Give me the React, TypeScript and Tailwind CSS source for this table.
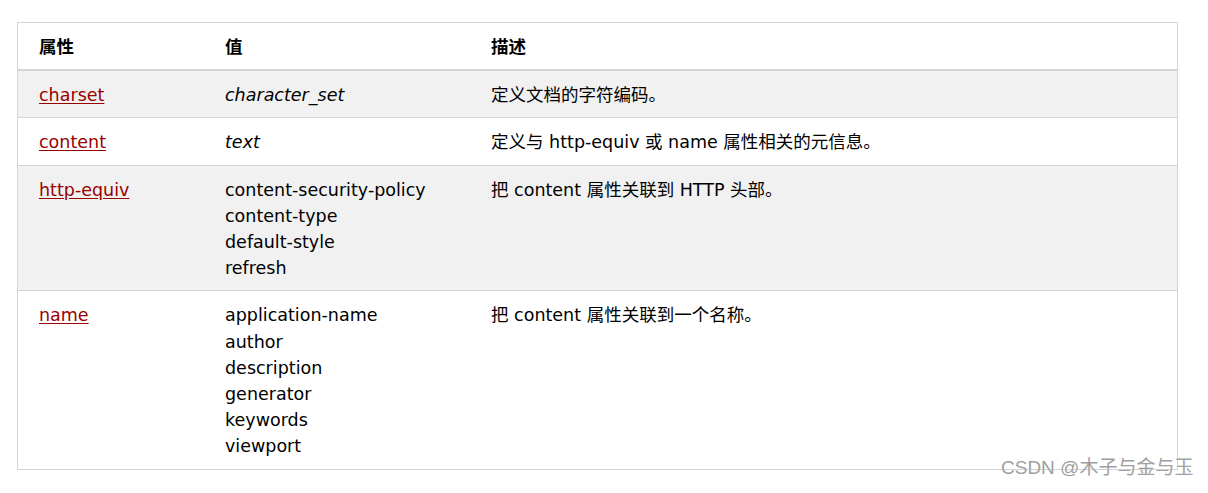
const rows = [
  { attr: 'charset', values: ['character_set'], italic: true, desc: '定义文档的字符编码。', bg: 'bg-[#f1f1f1]' },
  { attr: 'content', values: ['text'], italic: true, desc: '定义与 http-equiv 或 name 属性相关的元信息。', bg: 'bg-white' },
  {
    attr: 'http-equiv',
    values: ['content-security-policy', 'content-type', 'default-style', 'refresh'],
    italic: false,
    desc: '把 content 属性关联到 HTTP 头部。',
    bg: 'bg-[#f1f1f1]',
  },
  {
    attr: 'name',
    values: ['application-name', 'author', 'description', 'generator', 'keywords', 'viewport'],
    italic: false,
    desc: '把 content 属性关联到一个名称。',
    bg: 'bg-white',
  },
];

export default function App() {
  return (
    <div className="relative h-[493px] w-[1208px] bg-white pl-[17px] pt-[22px] font-['DejaVu_Sans','Noto_Sans_CJK_SC',sans-serif] text-[17.5px] leading-[26.2px] text-black">
      <div className="w-[1161px] border border-[#d4d4d4]">
        <div className="grid grid-cols-[186px_266px_1fr] border-b-2 border-[#d4d4d4] pb-[9px] pt-[11px] font-bold">
          <div className="pl-[21px]">属性</div>
          <div className="pl-[21px]">值</div>
          <div className="pl-[21px]">描述</div>
        </div>
        {rows.map((r, i) => (
          <div
            key={r.attr}
            className={`grid grid-cols-[186px_266px_1fr] pb-[9px] pt-[11px] ${r.bg} ${i < rows.length - 1 ? 'border-b border-[#d4d4d4]' : ''}`}
          >
            <div className="pl-[21px]">
              <a className="text-[#900] underline underline-offset-2">{r.attr}</a>
            </div>
            <div className={`pl-[21px] ${r.italic ? 'italic' : ''}`}>
              {r.values.map((v) => (
                <div key={v}>{v}</div>
              ))}
            </div>
            <div className="pl-[21px]">{r.desc}</div>
          </div>
        ))}
      </div>
      <div className="absolute left-[1001px] top-[454px] font-['Liberation_Sans','Noto_Sans_CJK_SC',sans-serif] text-[19px] leading-[28px] text-[#a0a0a0] [text-shadow:0_0_1px_#fff]">
        CSDN @木子与金与玉
      </div>
    </div>
  );
}
